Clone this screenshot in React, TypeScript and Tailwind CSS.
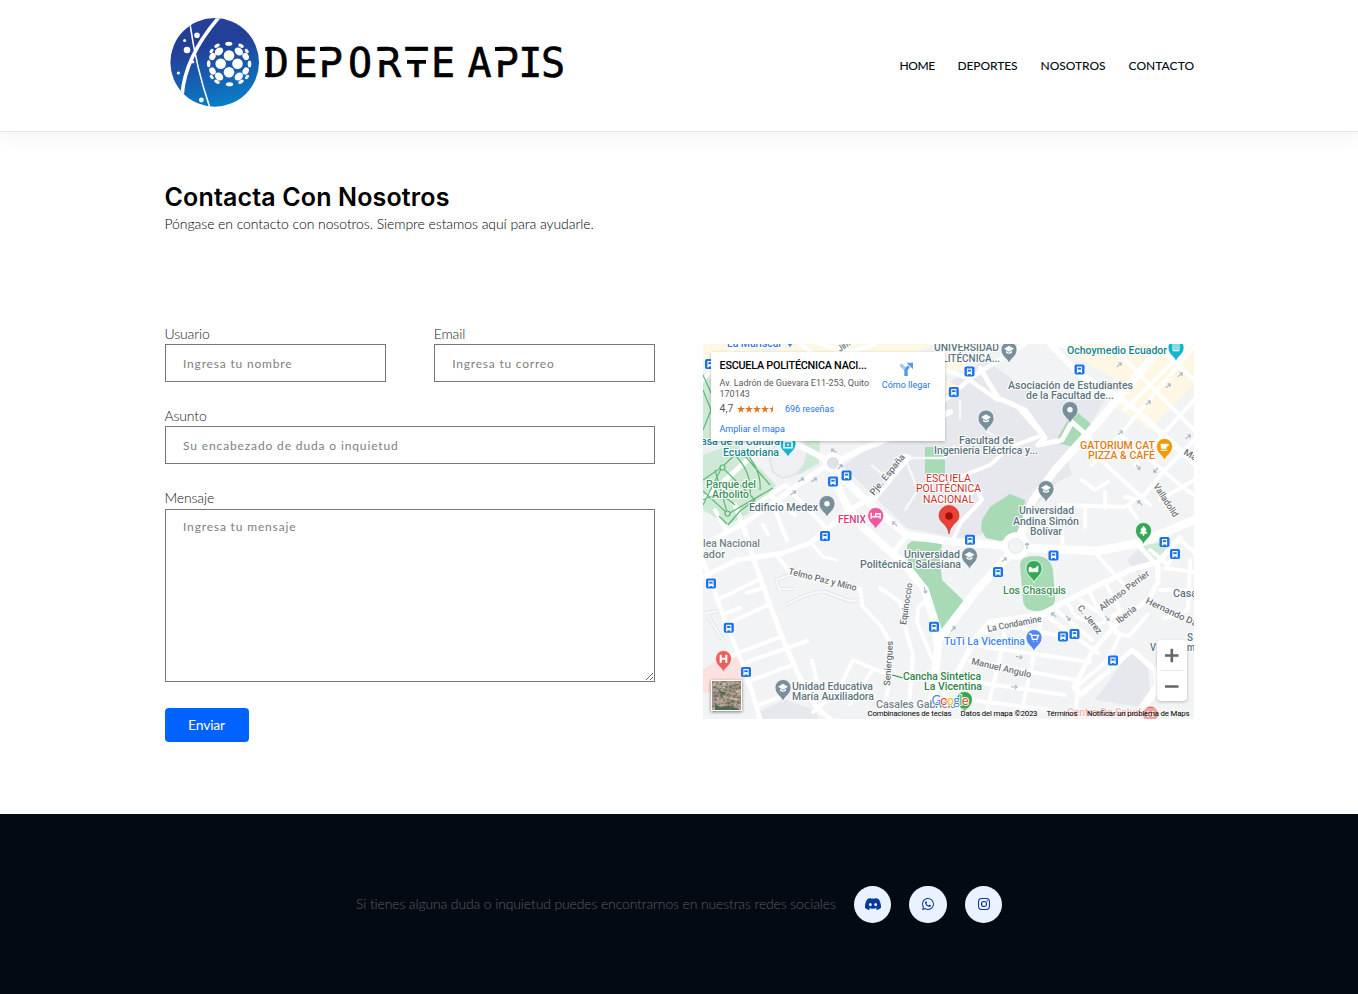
import React from "react";
import { BsDiscord, BsWhatsapp, BsInstagram } from "react-icons/bs";

const navItems = [
  { label: "HOME", cls: "w-[34px] tracking-[-0.45px]" },
  { label: "DEPORTES", cls: "w-[59px] tracking-[-0.1px]" },
  { label: "NOSOTROS", cls: "w-[64px] tracking-[-0.05px]" },
  { label: "CONTACTO", cls: "w-[65px] tracking-[0.05px]" },
];

const ballDots: [number, number, number, number, number][] = [
  [229, 55.5, 5.3, 5.3, 0], [220.7, 63.7, 5.3, 5.3, 0], [237.5, 63.7, 5.3, 5.3, 0], [229, 72.3, 5.3, 5.3, 0],
  [219, 51.5, 4.6, 3.6, -40], [238.8, 51.5, 4.6, 3.6, 40], [228.8, 43.7, 3.6, 2, 0],
  [212.5, 56.5, 3, 3.8, 30], [245.7, 56.5, 3, 3.8, -30], [212.5, 71, 3, 3.8, -30], [245.7, 71, 3, 3.8, 30],
  [219, 76.5, 4.6, 3.6, 40], [238.8, 76.5, 4.6, 3.6, -40], [229.5, 84.2, 3.6, 2, 0],
  [208.7, 63.7, 1.8, 3.5, 0], [249.5, 64, 1.8, 3.5, 0], [217, 45.7, 3, 1.7, -30], [241, 45.7, 3, 1.7, 30],
  [211.5, 51, 2.5, 1.6, -50], [246.7, 51, 2.5, 1.6, 50], [211.7, 77, 2.5, 1.6, 50], [247, 77, 2.5, 1.6, -50],
  [217, 81.7, 3, 1.8, 30], [241, 81.7, 3, 1.8, -30],
];

function Logo() {
  return (
    <svg className="block h-[100px] w-[402px]" viewBox="165 12 402 100" role="img" aria-label="Deporte Apis">
      <defs>
        <linearGradient id="globe" x1="0.35" y1="0" x2="0.6" y2="1">
          <stop offset="0.3" stopColor="#233f98" />
          <stop offset="1" stopColor="#087fc8" />
        </linearGradient>
        <clipPath id="globeClip"><circle cx="214.7" cy="62.4" r="44.3" /></clipPath>
      </defs>
      <circle cx="214.7" cy="62.4" r="44.3" fill="url(#globe)" />
      <g clipPath="url(#globeClip)">
        <path d="M220 16C199 40 184 66 182 96" fill="none" stroke="#fff" strokeWidth="3.6" />
        <path d="M190 24C194 52 201 82 210 108" fill="none" stroke="#fff" strokeWidth="1.6" />
        <g fill="#fff">
          <circle cx="197" cy="35.3" r="2.8" /><circle cx="187" cy="50" r="3.3" /><circle cx="184.6" cy="40.5" r="1.5" />
          <circle cx="178.4" cy="73" r="1.6" /><circle cx="201.4" cy="100" r="2.4" /><circle cx="193" cy="62" r="1.4" />
          {ballDots.map(([cx, cy, rx, ry, a], i) => (
            <ellipse key={i} cx={cx} cy={cy} rx={rx} ry={ry} transform={`rotate(${a} ${cx} ${cy})`} />
          ))}
        </g>
      </g>
      <text x="264.7 293.5 318.8 348 377 404.5 431.1 467.5 494.8 518.2 541" y="76.7" fontFamily="'DejaVu Sans Mono', monospace" fontSize="40" fill="#000" stroke="#000" strokeWidth="0.6">
        DEPORTEAPIS
      </text>
      <g fill="#fff">
        <rect x="320.5" y="51" width="8.2" height="9.3" />
        <rect x="378.5" y="51" width="8.2" height="9" />
        <rect x="407" y="51" width="19" height="9" />
        <rect x="496.5" y="51" width="8.2" height="9.3" />
      </g>
      <path d="M407 61.8H426M320 49H326M377.3 49H383M495 49H501M265.3 49H270M265.3 75H270" stroke="#000" strokeWidth="3.8" />
    </svg>
  );
}

const roads: [string, number][] = [
  ["M703 500L770 440L800 420", 5],
  ["M703 577L737 560L783 553L810 543L850 510L872 497", 5],
  ["M735 505L743 525L753 558L780 632L797 672L817 708L830 719", 5],
  ["M703 560L717 598L728 628L747 675L760 719", 4.5],
  ["M717 600L758 580M729 623L768 605M726 613L740 608M747 593L762 588M733 655L780 637M747 662L807 641M747 682L792 665M758 705L780 697", 4],
  ["M777 556L790 572L860 589Q862 600 862 606L880 625L890 642L888 690L881 719", 3.8],
  ["M770 430L800 446L833 463L860 450L905 432L950 412", 6],
  ["M833 478L848 508L863 527L905 565L925 590L935 625L938 647L930 719", 8],
  ["M829 463L745 523L703 545", 5],
  ["M835 465L850 485L873 507L907 535L953 542L1006 546", 7.5],
  ["M907 535L893 553", 5],
  ["M953 540L961 522L982 500L977 490L960 499", 4],
  ["M872 503L910 457L905 455", 3],
  ["M813 545L823 557L837 560", 3],
  ["M880 588L900 602L907 635L913 655L908 719", 4],
  ["M933 661L917 622L918 607L928 600", 3.8],
  ["M813 712L837 692L853 660L893 677M873 669L850 704M812 661L817 680L800 687", 4],
  ["M1019 541L1033 500L1055 470L1100 420L1164 344", 8],
  ["M1010 554L977 590L940 638", 8.5],
  ["M1026 548L1097 551L1140 543L1194 520", 8.5],
  ["M1050 344L1078 373L1130 405L1194 463", 6],
  ["M1110 344L1194 430M1080 350L1055 344", 4],
  ["M1155 344L1194 380M1194 347L1118 437L1092 465M1150 550L1168 565L1175 550", 4],
  ["M1125 410L1190 344M1135 465L1194 400M1092 452L1150 505M1120 435L1180 485L1194 495M1125 497L1140 500L1165 470L1194 440M1160 500L1194 480M1128 505L1137 518", 4],
  ["M980 368L998 398L1025 410L1045 438L1038 445L1062 440L1072 422L1090 438", 5],
  ["M945 370L965 377L998 400M945 400L975 375L1025 344", 4.5],
  ["M1040 436L1010 447L990 465L965 475L948 482M1043 436L1020 410", 4],
  ["M1060 505L1125 507L1137 498M1105 492L1105 508M1085 506V527M1062 530L1063 550M1082 480L1095 490L1108 482", 3.8],
  ["M945 695L977 636L990 622L1040 615L1080 594L1130 570L1158 562L1180 538", 5.5],
  ["M1098 556L1125 586M1080 600L1105 617L1120 635L1108 660L1078 685L1075 719", 4],
  ["M1138 545L1158 566L1158 582L1148 600L1120 620L1092 652L1074 687L1080 695L1110 670L1132 650L1155 670L1158 690L1135 719", 5],
  ["M1045 615L1098 653M1055 609L1092 640M1067 602L1076 617L1100 625L1122 610M1088 590L1098 608M1104 581L1120 610M1115 633L1129 636L1148 614", 4],
  ["M976 637L1000 625L1062 636M1004 625L1004 640L985 719M1042 616L1035 650L1020 719M972 645L1090 662M970 661L1075 680M960 680L1065 695M956 698L1050 710", 4],
  ["M1165 568L1194 572M1160 590L1194 590M1190 560L1188 610L1165 618M1180 540L1194 552", 4],
  ["M1194 635L1168 668L1140 708", 4],
  ["M763 525L768 534M775 510L787 540M715 510L726 530", 4],
  ["M703 380L720 360L740 344M820 344L850 352L875 344M800 344L816 356", 4],
  ["M755 505L785 485L828 530M770 495L795 515", 4],
];

const greens = [
  "M703 455L735 443L776 485L755 510L728 525L703 510Z",
  "M703 375L712 380L712 440L703 445Z",
  "M800 440L820 440L819 463L798 475Z",
  "M925 447H945V474H925Z",
  "M1068 420L1075 410L1092 425L1085 440L1073 447L1055 442Z",
  "M982 520L990 507L1010 494L1025 500L1023 517L1015 537L1000 541L986 538L981 530Z",
  "M907 545L912 541L942 543L940 560L942 580L965 602L943 633L930 593L908 563Z",
  "M1020 565Q1020 556 1036 556Q1050 556 1053 570L1055 600Q1053 611 1036 611Q1024 611 1023 600Z",
  "M1141 546L1167 541L1171 550L1157 563Z",
];

const yellows = [
  "M703 344H770L745 372L703 360Z", "M790 344H935L918 352H770Z", "M1062 344H1194V385L1150 430L1112 405L1125 385L1090 365Z",
  "M945 380L960 387L945 395Z", "M945 354L960 358L968 364L950 375H945Z",
];

const campuses = [
  "M843 466L880 440L945 415V385L985 360L1035 395L1105 400L1068 460L1072 475L1058 482L1022 520L1010 494L982 520L982 535L955 538L907 528Z",
  "M1127 560L1140 547L1152 562L1137 573Z",
  "M1110 680L1130 652L1148 668L1150 690L1140 707L1095 700Z",
  "M760 711L785 700L815 710L818 719H760Z",
];

const buses: [number, number][] = [
  [846.5, 475.5], [833, 481.5], [969.5, 371.5], [1079.5, 369.5], [953.8, 392], [825, 536], [711, 583.5],
  [728.8, 627.8], [746, 672], [934, 626.8], [970, 539.8], [998, 572], [1053.5, 555.5], [1164.5, 542],
  [1175, 554], [1063, 636.5], [1074.5, 634], [1113, 660.5], [710, 364],
];

type PinKind = "school" | "dot" | "bed" | "cup" | "tree" | "cart" | "h" | "building" | "camera" | "field";
const pins: [number, number, string, PinKind][] = [
  [827, 505, "#78909c", "dot"], [1009, 351, "#78909c", "school"], [986, 419.5, "#78909c", "school"],
  [1070, 411, "#78909c", "dot"], [1046, 490, "#78909c", "school"], [969.5, 557, "#78909c", "school"],
  [783, 689, "#78909c", "school"], [875.7, 517, "#f0599b", "bed"], [1164.5, 448, "#f29900", "cup"],
  [1143.5, 532, "#34a853", "tree"], [1034, 570, "#34a853", "field"], [1034, 639, "#4f87ed", "cart"],
  [723.5, 660, "#ec5f5b", "h"], [1176, 349, "#12b5cb", "building"], [788, 445, "#12b5cb", "camera"],
  [964.5, 701, "#34a853", "dot"], [790, 336, "#4285f4", "dot"],
];

function PinGlyph({ kind }: { kind: PinKind }) {
  switch (kind) {
    case "school":
      return <path d="M-5-1L0-4L5-1L0 2ZM-3 1V3Q0 5 3 3V1L0 3Z" fill="#fff" />;
    case "dot":
      return <circle r="2.7" fill="#fff" />;
    case "bed":
      return <path d="M-4.5-3V3M-4 1H4.5V3M4.5 1V-2H0V1M-2-1H-1.8" stroke="#fff" strokeWidth="1.4" fill="none" />;
    case "cup":
      return <path d="M-4-3H4Q5 0 2 0V2H-3Q-4 1-4-3ZM-4 3H3V4H-4Z" fill="#fff" />;
    case "tree":
      return <path d="M0-5L3.4-.5H1.8L4 3H.8V5H-.8V3H-4L-1.8-.5H-3.4Z" fill="#fff" />;
    case "cart":
      return <path d="M-5-4H-3L-1.5 1.5H3L4.5-2.5H-2M-1 3.5H-.2M2.6 3.5H3.4" stroke="#fff" strokeWidth="1.3" fill="none" />;
    case "h":
      return <path d="M-2.8-4V4M2.8-4V4M-2.8 0H2.8" stroke="#fff" strokeWidth="2" />;
    case "building":
      return <path d="M-3-6H3V3H-3ZM-1-6V3M1-6V3" stroke="#fff" fill="none" />;
    case "camera":
      return <path d="M-4-2H4V4H-4ZM-1 1H1" stroke="#fff" strokeWidth="1.5" fill="none" />;
    case "field":
      return <path d="M-5-1Q-3-3-2 0Q1 1 4-3V3H-5Z" fill="#fff" stroke="#fff" strokeWidth=".7" />;
  }
}

const GRAY = "#5b7480";
const TEAL = "#12858f";
const labels: [string, number, number, number, string][] = [
  ["La Mariscal", 727, 347, 54, "#3576d8"],
  ["UNIVERSIDAD", 934, 351, 65, GRAY], ["POLITÉCNICA...", 929, 361.5, 71, GRAY],
  ["Ochoymedio Ecuador", 1067, 354, 100, TEAL],
  ["Asociación de Estudiantes", 1008, 389, 125, GRAY], ["de la Facultad de...", 1026, 399, 88, GRAY],
  ["Facultad de", 959, 443.5, 55, GRAY], ["Ingeniería Eléctrica y...", 934, 454, 104, GRAY],
  ["GATORIUM CAT", 1080, 449, 75, "#df7c13"], ["PIZZA & CAFÉ", 1088, 459, 67, "#df7c13"],
  ["Casa de la Cultura", 694, 445, 86, TEAL], ["Ecuatoriana", 723, 455.5, 56, TEAL],
  ["Parque del", 706, 487.5, 50, "#3b8f5a"], ["Arbolito", 712, 498, 37, "#3b8f5a"],
  ["Edificio Medex", 749, 511, 69, GRAY], ["FENIX", 838, 523, 28, "#d63a7c"],
  ["ESCUELA", 926, 481.5, 45, "#c5322c"], ["POLITÉCNICA", 916, 492, 65, "#c5322c"], ["NACIONAL", 923, 502.5, 51, "#c5322c"],
  ["Universidad", 1019, 514, 55, GRAY], ["Andina Simón", 1013, 524.5, 66, GRAY], ["Bolívar", 1030, 535, 32, GRAY],
  ["lea Nacional", 703, 547, 57, "#73838b"], ["ador", 703, 557.5, 22, "#73838b"],
  ["Universidad", 904, 557.5, 56, GRAY], ["Politécnica Salesiana", 860, 568, 101, GRAY],
  ["Los Chasquis", 1003, 594, 63, "#38914f"], ["TuTi La Vicentina", 944, 645, 81, "#4285f4"],
  ["Cancha Sintetica", 903, 679.5, 78, "#2a8644"], ["La Vicentina", 924, 690, 58, "#2a8644"],
  ["Unidad Educativa", 792, 689.5, 81, "#607680"], ["María Auxiliadora", 792, 700, 82, "#607680"],
  ["Casales Gabriela", 876, 707.5, 80, "#73838b"], ["Centro De Salud", 1067, 716, 74, "#ef8a86"],
  ["Casa", 1173, 597, 24, GRAY], ["S", 1187, 641, 6, GRAY], ["V", 1150, 651, 6, GRAY], ["ma", 1187, 651, 13, GRAY],
];

const streets: [string, number, number, number, number][] = [
  ["Pje. España", 874, 496, -51, 50], ["Telmo Paz y Mino", 788, 574, 14, 70], ["Equinoccio", 906, 625, -81, 42],
  ["Seniergues", 890, 686, -86, 45], ["La Condamine", 988, 632, -11, 55], ["Manuel Angulo", 971, 664, 13, 61],
  ["Alfonso Perrier", 1102, 611, -37, 60], ["Iberia", 1119, 624, -38, 23], ["C. Jerez", 1077, 608, 52, 34],
  ["Hernando Daza", 1145, 603, 25, 66], ["Valladolid", 1153, 486, 57, 38], ["Mariscal", 1183, 454, 30, 38],
  ["Jiménez", 840, 352, -33, 30],
];

const arrows: [number, number, number][] = [
  [834, 451, -150], [801, 480, -35], [814, 480, -35], [793, 493, -35], [840, 467, -45], [895, 524, -140], [925, 590, 75],
  [1119, 365, -40], [1168, 386, -40], [1148, 403, -40], [1188, 437, -40], [1138, 467, 45], [1156, 470, 135],
  [1120, 433, -40], [1140, 503, -135], [1027, 546, -90], [1004, 560, -40], [953, 629, -50], [1054, 615, -140],
  [1068, 618, 50], [1107, 618, 50], [1019, 657, 10], [1014, 687, 5], [1180, 375, -40],
];

function MapCanvas() {
  return (
    <svg className="block h-[375px] w-[491px]" viewBox="703 344 491 375" fontFamily="Roboto, sans-serif">
      <rect x="703" y="344" width="491" height="375" fill="#f1f3f5" />
      {campuses.map((d) => <path key={d} d={d} fill="#e7e8ed" />)}
      {yellows.map((d) => <path key={d} d={d} fill="#fef7e3" />)}
      <path d="M703 670L722 657L742 658L744 680L715 692L703 693Z" fill="#fbe2e0" />
      <path d="M703 373Q730 365 775 400L819 425L820 465L790 480L755 450L703 455Z" fill="#edf0f2" />
      {greens.map((d, i) => <path key={d} d={d} fill={i < 3 || i === 8 ? "#ceead6" : "#a8dab5"} />)}
      <path d="M773 472Q764 450 785 438Q806 430 807 453Q804 476 782 478Z" fill="#eef0f2" stroke="#dfe3e6" strokeWidth="1.5" />
      <g fill="none" stroke="#dfe2e6" strokeWidth="4" strokeLinejoin="round">
        <path d="M786 605Q810 591 825 592L850 601L859 600M780 592L776 580L795 573M778 589H794M707 614L722 639M706 613L719 611" />
      </g>
      <g fill="none" stroke="#f7f8fa" strokeWidth="2.4">
        <path d="M786 605Q810 591 825 592L850 601L859 600M780 592L776 580L795 573M778 589H794M707 614L722 639M706 613L719 611" />
        <path d="M871 465L890 480L905 458H945L955 445M905 458L918 490L905 510M960 420V400M1000 440L985 430" />
      </g>
      <g fill="none" stroke="#fff" strokeLinecap="round" strokeLinejoin="round">
        {roads.map(([d, w]) => <path key={d} d={d} strokeWidth={w} />)}
        <circle cx="1015.7" cy="546" r="11" strokeWidth="5.5" fill="#fff" />
        <circle cx="1015.7" cy="546" r="7.5" stroke="#dfe2e6" strokeWidth=".8" fill="#f1f3f5" />
        <circle cx="833" cy="463" r="8" strokeWidth="4" fill="#dfe1e5" />
      </g>
      <g fill="none" stroke="#5bb974" strokeWidth="1.2">
        <path d="M703 480L722 467L755 500L740 511L728 525M703 505L722 467M703 491L728 514L773 488M727 512L715 470M722 467L740 450L770 485M735 455Q752 472 750 495M742 449Q762 469 760 490M703 500Q720 490 735 505M719 516L727 524M703 375L712 395M703 390L711 410L703 430" />
        <circle cx="722.5" cy="467.5" r="2.5" fill="#ceead6" /><circle cx="727.5" cy="513.5" r="2.5" fill="#ceead6" />
        <path d="M892 675L903 678" stroke="#2a8644" />
      </g>
      {arrows.map(([x, y, a], i) => (
        <path key={i} d="M-3 0H3M1-2L3 0L1 2" fill="none" stroke="#a9b3c6" strokeWidth="1.1" transform={`translate(${x} ${y}) rotate(${a})`} />
      ))}
      <g fontSize="9.2" fontWeight="500" fill="#6b7077" stroke="#fff" strokeWidth="2" paintOrder="stroke">
        {streets.map(([t, x, y, a, w]) => (
          <text key={t} textLength={w} lengthAdjust="spacingAndGlyphs" transform={`translate(${x} ${y}) rotate(${a})`}>{t}</text>
        ))}
      </g>
      {buses.map(([x, y], i) => (
        <g key={i} transform={`translate(${x} ${y})`}>
          <rect x="-5" y="-5" width="10" height="10" rx="1.8" fill="#1a73e8" />
          <path d="M-2.6-3H2.6V2.5H-2.6Z" fill="#fff" />
          <path d="M-1.7-1.8H1.7V.1H-1.7Z" fill="#1a73e8" />
          <path d="M-2 2V3.6M2 2V3.6" stroke="#fff" strokeWidth="1.2" />
        </g>
      ))}
      {pins.map(([x, y, c, k], i) => (
        <g key={i} transform={`translate(${x} ${y})`}>
          <path d="M0 13C-1 7-8 6-8-1.5A8 8 0 0 1 8-1.5C8 6 1 7 0 13Z" fill={c} stroke="#fff" strokeWidth=".7" />
          <g transform="translate(0 -1.2)"><PinGlyph kind={k} /></g>
        </g>
      ))}
      <g>
        <path d="M949 534C948 524 939 523 939 515.5A10 10 0 0 1 959 515.5C959 523 950 524 949 534Z" fill="#ea4335" stroke="#c5221f" strokeWidth=".6" />
        <circle cx="949" cy="516" r="3.8" fill="#a50e0e" />
      </g>
      <g fontSize="10.3" stroke="#fff" strokeWidth="2.2" strokeLinejoin="round" paintOrder="stroke">
        {labels.map(([t, x, y, w, c], i) => (
          <text key={i} x={x} y={y} fill={c} fontWeight={c === "#c5322c" ? 400 : 500} textLength={w} lengthAdjust="spacingAndGlyphs">{t}</text>
        ))}
      </g>
      <circle cx="1150.5" cy="714" r="7.5" fill="#ea6b66" />
      <path d="M1148 711V717M1153 711V717M1148 714H1153" stroke="#fff" strokeWidth="1.5" />
      <rect x="865" y="708" width="329" height="11" fill="#f5f5f5" opacity=".4" />
      <g fontSize="13" fontFamily="Lato, sans-serif" stroke="#fff" strokeWidth="1.6" paintOrder="stroke">
        <text x="931.5" y="704.5" textLength="37"><tspan fill="#4285f4">G</tspan><tspan fill="#ea4335">o</tspan><tspan fill="#fbbc04">o</tspan><tspan fill="#4285f4">g</tspan><tspan fill="#34a853">l</tspan><tspan fill="#ea4335">e</tspan></text>
      </g>
      <g fontSize="7.8" fill="#000">
        <text x="867.5" y="716" textLength="84">Combinaciones de teclas</text>
        <text x="960.5" y="716" textLength="77">Datos del mapa ©2023</text>
        <text x="1046.5" y="716" textLength="31">Términos</text>
        <text x="1087" y="716" textLength="102.5">Notificar un problema de Maps</text>
      </g>
    </svg>
  );
}

function Star({ half = false }: { half?: boolean }) {
  return (
    <svg className="h-2 w-2" viewBox="0 0 24 24" fill="#e7711b">
      <path d={half ? "M12 1V18L5 23L7.5 14.5L0 9H9Z" : "M12 1L15 9H24L16.5 14.5L19 23L12 18L5 23L7.5 14.5L0 9H9Z"} />
    </svg>
  );
}

function PlaceCard() {
  return (
    <div className="absolute left-2 top-2 h-[89px] w-[234px] bg-white pl-[7.5px] pr-2 pt-2 font-[Roboto,sans-serif] text-[9px] text-[#5b5b5b] shadow-[0_1px_3px_rgba(0,0,0,0.25)]">
      <div className="flex justify-between">
        <div className="w-[155px] pl-px">
          <div className="whitespace-nowrap text-[10.8px] font-medium leading-[12px] tracking-[-0.22px] text-black">ESCUELA POLITÉCNICA NACI...</div>
          <div className="mt-[6px] whitespace-nowrap leading-[11px]">Av. Ladrón de Guevara E11-253, Quito<br />170143</div>
        </div>
        <div className="flex w-[62px] flex-col items-center text-[9px] text-[#1a73e8]">
          <svg className="mt-[2px] h-[15px] w-[15px]" viewBox="0 0 15 15" fill="none">
            <path d="M1.5 2.5L7 8V14" stroke="#a8c7f5" strokeWidth="3.2" />
            <path d="M7 14V9Q7 6.5 10 4.5" stroke="#579be8" strokeWidth="3.2" />
            <path d="M7.5.8H14V7.2Z" fill="#579be8" />
          </svg>
          <span className="mt-[2px] whitespace-nowrap leading-[12px]">Cómo llegar</span>
        </div>
      </div>
      <div className="mt-[3px] flex items-center pl-px leading-[12px]">
        <span className="w-[17px] text-[10.5px]">4,7</span>
        <span className="flex w-[48.5px]"><Star /><Star /><Star /><Star /><Star half /></span>
        <span className="text-[#1a73e8]">696 reseñas</span>
      </div>
      <div className="mt-[9px] pl-px leading-[11px] text-[#1a73e8]">Ampliar el mapa</div>
    </div>
  );
}

const specks = Array.from({ length: 150 }, (_, i) => ({
  x: (i * 17.3) % 28, y: (i * 11.7 + (i % 7) * 3) % 28, c: ["#81796d", "#bcaa9a", "#63745a", "#d0bfb1", "#766a61"][i % 5],
}));

function MapPanel() {
  return (
    <div className="relative mt-[19px] h-[375px] w-[491px] overflow-hidden">
      <MapCanvas />
      <PlaceCard />
      <svg className="absolute bottom-2 left-2 h-[31px] w-[31px] border border-white shadow-[0_1px_3px_rgba(0,0,0,0.5)]" viewBox="0 0 28 28">
        <rect width="28" height="28" fill="#a49588" />
        {specks.map((s, i) => <rect key={i} x={s.x} y={s.y} width={1 + (i % 3)} height={1 + (i % 2)} fill={s.c} />)}
        <path d="M3 22L8 25L17 24L26 27V28H3ZM4 6L9 10L14 11L10 14Z" fill="#52664c" />
      </svg>
      <div className="absolute bottom-[18px] right-[7px] flex h-[61px] w-[30px] flex-col items-center rounded-sm bg-white shadow-[0_1px_3px_rgba(0,0,0,0.25)]">
        <svg viewBox="0 0 30 61" className="h-[61px] w-[30px]" fill="none" stroke="#666" strokeWidth="2.6">
          <path d="M8 15.5H21.5M14.8 8.8V22.2M8 46.5H21.5" />
          <path d="M4 30.5H26" stroke="#e6e6e6" strokeWidth="1" />
        </svg>
      </div>
    </div>
  );
}

const field = "block w-full border border-[#767676] bg-white px-[17.5px] text-[12px] text-[#333] outline-none placeholder:text-[#808080]";
const label = "block h-[19px] text-[14px] font-light leading-[18px] tracking-[-0.15px] text-[#15181b]";

export default function App() {
  return (
    <div className="flex min-h-[994px] flex-col bg-white font-[Lato,sans-serif]">
      <header className="relative h-[132px] border-b border-[#e5e5e5] bg-white shadow-[0_4px_20px_rgba(0,0,0,0.06)]">
        <div className="mx-auto flex w-[1029px] items-start justify-between pt-3">
          <Logo />
          <nav className="mt-[46px] flex gap-6 whitespace-nowrap text-[12px] font-medium leading-4 text-[#020b12]">
            {navItems.map((n) => <a key={n.label} href="#" className={n.cls}>{n.label}</a>)}
          </nav>
        </div>
      </header>

      <main className="mx-auto w-[1029px] flex-1 pt-[46px]">
        <h1 className="font-[Inter,sans-serif] text-[25px] font-semibold leading-[38px] tracking-[0.15px] text-black">Contacta Con Nosotros</h1>
        <p className="text-[14px] font-light leading-[16px] tracking-[-0.07px] text-black">Póngase en contacto con nosotros. Siempre estamos aquí para ayudarle.</p>

        <div className="mt-[93px] grid grid-cols-2 gap-12">
          <form className="flex flex-col">
            <div className="grid grid-cols-2 gap-12">
              <div>
                <label className={label}>Usuario</label>
                <input className={`${field} h-[38px] tracking-[0.82px]`} placeholder="Ingresa tu nombre" />
              </div>
              <div>
                <label className={label}>Email</label>
                <input className={`${field} h-[38px] tracking-[0.78px]`} placeholder="Ingresa tu correo" />
              </div>
            </div>
            <div className="mt-[25px]">
              <label className={label}>Asunto</label>
              <input className={`${field} h-[38px] tracking-[0.87px]`} placeholder="Su encabezado de duda o inquietud" />
            </div>
            <div className="mt-[25px]">
              <label className={`${label} mb-px`}>Mensaje</label>
              <textarea className={`${field} h-[173px] pt-[9px] leading-4 tracking-[0.84px]`} placeholder="Ingresa tu mensaje" />
            </div>
            <button type="button" className="mt-[26px] h-[34px] w-[84px] rounded-[4px] bg-[#0062ff] pb-[2px] text-[14px] tracking-[-0.2px] text-white">Enviar</button>
          </form>
          <MapPanel />
        </div>
      </main>

      <footer className="flex h-[180px] items-center justify-center bg-[#020b12]">
        <p className="mr-[18px] w-[480px] whitespace-nowrap pb-[2px] text-[14px] font-light tracking-[-0.14px] text-[#5a5d60]">Si tienes alguna duda o inquietud puedes encontrarnos en nuestras redes sociales</p>
        <div className="flex gap-[18px] text-[#07399c]">
          <a href="#" aria-label="Discord" className="flex h-[37px] w-[37px] items-center justify-center rounded-full bg-[#ebf2ff]"><BsDiscord className="h-4 w-4" /></a>
          <a href="#" aria-label="WhatsApp" className="flex h-[37px] w-[38px] items-center justify-center rounded-full bg-[#ebf2ff]"><BsWhatsapp className="h-3 w-3" /></a>
          <a href="#" aria-label="Instagram" className="flex h-[37px] w-[37px] items-center justify-center rounded-full bg-[#ebf2ff]"><BsInstagram className="h-3 w-3" /></a>
        </div>
      </footer>
    </div>
  );
}
